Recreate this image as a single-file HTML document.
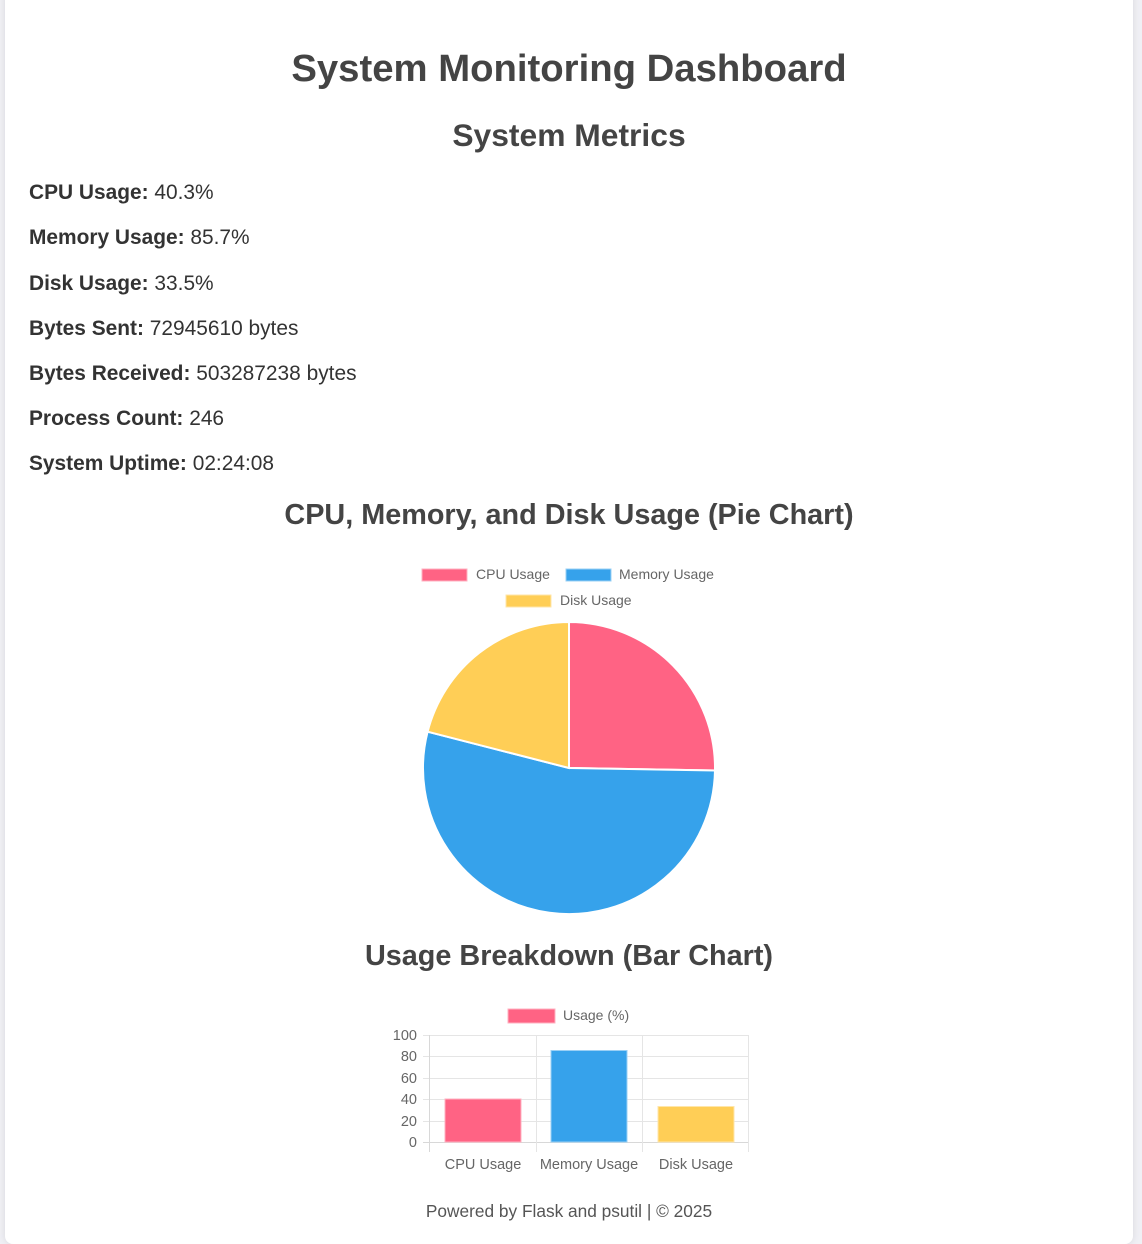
<!DOCTYPE html>
<html><head><meta charset="utf-8"><style>
html,body{margin:0;padding:0;overflow:hidden;height:1244px;}
body{width:1142px;height:1244px;background:#f0f0f5;font-family:"Liberation Sans",Arial,sans-serif;position:relative;overflow:hidden;}
.c{position:absolute;left:5px;top:-10px;width:1128px;height:1254px;background:#fff;border-radius:8px;box-shadow:0 0 8px rgba(0,0,0,0.1);}
.t{position:absolute;left:5px;width:1128px;text-align:center;font-weight:bold;color:#444;white-space:nowrap;}
.m{position:absolute;left:29px;font-size:20.9px;color:#333;white-space:nowrap;line-height:24px;}
.m b{color:#333;}
</style></head><body>
<div class="c"></div>
<div class="t" style="top:46px;font-size:38.3px;line-height:46px;">System Monitoring Dashboard</div>
<div class="t" style="top:116px;font-size:31.8px;line-height:38px;">System Metrics</div>
<div class="m" style="top:181px"><b>CPU Usage:</b> 40.3%</div>
<div class="m" style="top:226px"><b>Memory Usage:</b> 85.7%</div>
<div class="m" style="top:272px"><b>Disk Usage:</b> 33.5%</div>
<div class="m" style="top:317px"><b>Bytes Sent:</b> 72945610 bytes</div>
<div class="m" style="top:362px"><b>Bytes Received:</b> 503287238 bytes</div>
<div class="m" style="top:407px"><b>Process Count:</b> 246</div>
<div class="m" style="top:452px"><b>System Uptime:</b> 02:24:08</div>
<div class="t" style="top:497px;font-size:28.8px;line-height:36px;">CPU, Memory, and Disk Usage (Pie Chart)</div>
<div class="t" style="top:938px;font-size:28.8px;line-height:36px;">Usage Breakdown (Bar Chart)</div>
<svg style="position:absolute;left:0;top:0" width="1142" height="1244" font-family="Liberation Sans, Arial, sans-serif">
<g font-size="14" fill="#666">
<rect x="422" y="569" width="45" height="12" fill="#ff6384" stroke="#ffb1c1"/>
<text x="476" y="579">CPU Usage</text>
<rect x="566" y="569" width="45" height="12" fill="#36a2eb" stroke="#9ad0f5"/>
<text x="619" y="579">Memory Usage</text>
<rect x="506" y="595" width="45" height="12" fill="#ffce56" stroke="#ffe6aa"/>
<text x="560" y="605">Disk Usage</text>
</g>
<g stroke="#fff" stroke-width="2">
<path d="M569,768 L569,622 A146,146 0 0 1 714.98,770.5 Z" fill="#ff6384"/>
<path d="M569,768 L714.98,770.5 A146,146 0 1 1 427.6,731.7 Z" fill="#36a2eb"/>
<path d="M569,768 L427.6,731.7 A146,146 0 0 1 569,622 Z" fill="#ffce56"/>
</g>
<g font-size="14" fill="#666">
<rect x="508" y="1009" width="47" height="14" fill="#ff6384" stroke="#ffb1c1"/>
<text x="563" y="1020">Usage (%)</text>
</g>
<g stroke="#e5e5e5" stroke-width="1">
<line x1="423" y1="1035.5" x2="748" y2="1035.5"/>
<line x1="423" y1="1056.5" x2="748" y2="1056.5"/>
<line x1="423" y1="1078.5" x2="748" y2="1078.5"/>
<line x1="423" y1="1099.5" x2="748" y2="1099.5"/>
<line x1="423" y1="1121.5" x2="748" y2="1121.5"/>
<line x1="423" y1="1142.5" x2="748" y2="1142.5" stroke="#d8d8d8"/>
<line x1="429.5" y1="1035" x2="429.5" y2="1152" stroke="#d8d8d8"/>
<line x1="536.5" y1="1035" x2="536.5" y2="1152"/>
<line x1="642.5" y1="1035" x2="642.5" y2="1152"/>
<line x1="748.5" y1="1035" x2="748.5" y2="1152"/>
</g>
<rect x="445" y="1099" width="76" height="43" fill="#ff6384" stroke="#ffb1c1"/>
<rect x="551" y="1050.5" width="76" height="91.5" fill="#36a2eb" stroke="#9ad0f5"/>
<rect x="658" y="1106.5" width="76" height="35.5" fill="#ffce56" stroke="#ffe6aa"/>
<g font-size="14.5" fill="#666" text-anchor="end">
<text x="417" y="1040">100</text>
<text x="417" y="1061">80</text>
<text x="417" y="1083">60</text>
<text x="417" y="1104">40</text>
<text x="417" y="1126">20</text>
<text x="417" y="1147">0</text>
</g>
<g font-size="14.5" fill="#666" text-anchor="middle">
<text x="483" y="1169">CPU Usage</text>
<text x="589" y="1169">Memory Usage</text>
<text x="696" y="1169">Disk Usage</text>
</g>
<text x="569" y="1217" font-size="17.3" fill="#555" text-anchor="middle">Powered by Flask and psutil | © 2025</text>
</svg>
</body></html>
